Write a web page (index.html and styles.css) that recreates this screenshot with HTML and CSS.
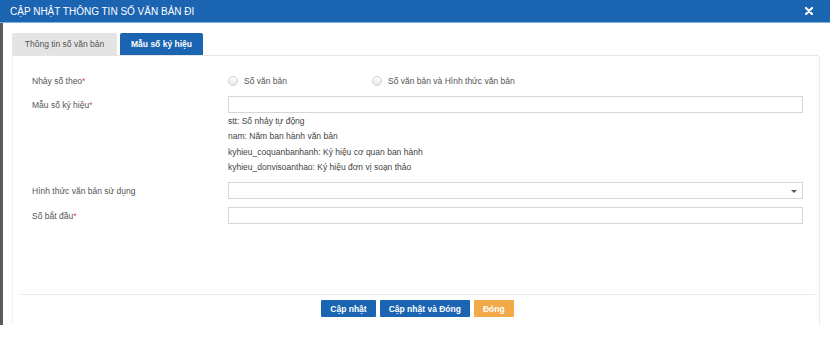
FILE: index.html
```html
<!DOCTYPE html>
<html>
<head>
    <meta charset="utf-8">
    <link rel="stylesheet" href="styles.css">
</head>
<body>
    <div class="modal-header">
        <span class="modal-title">Cập nhật thông tin số văn bản đi</span>
        <svg class="close" width="8" height="8" viewBox="0 0 8 8">
            <path d="M1 1L7 7M7 1L1 7" stroke="#fff" stroke-width="2.2" stroke-linecap="round"/>
        </svg>
    </div>

    <div class="shell">
        <div class="tabs">
            <div class="tab">Thông tin số văn bản</div>
            <div class="tab active">Mẫu số ký hiệu</div>
        </div>

        <div class="panel">
            <div class="form">
                <div class="row">
                    <label>Nhảy số theo<span class="req">*</span></label>
                    <div class="radios">
                        <span class="radio"><i></i>Số văn bản</span>
                        <span class="radio"><i></i>Số văn bản và Hình thức văn bản</span>
                    </div>
                </div>

                <div class="row">
                    <label>Mẫu số ký hiệu<span class="req">*</span></label>
                    <div class="input"></div>
                </div>

                <div class="row help-row">
                    <span></span>
                    <div class="help">
                        <div>stt: Số nhảy tự động</div>
                        <div>nam: Năm ban hành văn bản</div>
                        <div>kyhieu_coquanbanhanh: Ký hiệu cơ quan ban hành</div>
                        <div>kyhieu_donvisoanthao: Ký hiệu đơn vị soạn thảo</div>
                    </div>
                </div>

                <div class="row gap-select">
                    <label>Hình thức văn bản sử dụng</label>
                    <div class="input select"><span class="caret"></span></div>
                </div>

                <div class="row">
                    <label>Số bắt đầu<span class="req">*</span></label>
                    <div class="input"></div>
                </div>
            </div>

            <div class="footer">
                <button class="btn btn-primary">Cập nhật</button>
                <button class="btn btn-primary">Cập nhật và Đóng</button>
                <button class="btn btn-warning">Đóng</button>
            </div>
        </div>
    </div>
</body>
</html>
```

FILE: styles.css
```css
body {
    margin: 0;
    font-family: "Liberation Sans", Arial, sans-serif;
    font-size: 8.5px;
    color: #444;
    background-color: #fff;
}
.modal-header {
    height: 22px;
    background-color: #1b64b2;
    border-bottom: 1px solid #7fb2e0;
    display: flex;
    align-items: center;
    justify-content: space-between;
    padding: 0 17px 0 10px;
}
.modal-title {
    color: #fff;
    text-transform: uppercase;
    font-size: 10px;
}
.shell {
    height: 292px;
    border-left: 3px solid #5c5c5c;
    padding: 10px 0 0 9px;
    display: flex;
    flex-direction: column;
    width: 808px;
}
.tabs {
    display: flex;
    gap: 3px;
    border-bottom: 1px solid #e6e6e6;
    width: 806px;
}
.tab {
    box-sizing: border-box;
    width: 105px;
    height: 22px;
    line-height: 22px;
    text-align: center;
    white-space: nowrap;
    background-color: #e4e4e4;
    color: #555;
    border-radius: 2px 2px 0 0;
}
.tab.active {
    width: 83px;
    background-color: #1b64b2;
    color: #fff;
    font-weight: bold;
}
.panel {
    flex: 1;
    border-left: 1px solid #f0f0f0;
    border-right: 1px solid #ececec;
    display: flex;
    flex-direction: column;
}
.form {
    padding: 17px 0 0 19px;
}
.row {
    display: grid;
    grid-template-columns: 196px 575px;
    align-items: center;
    margin-bottom: 7px;
}
.row label {
    color: #555;
}
.req {
    color: #e04848;
}
.radios {
    display: flex;
    height: 16px;
    align-items: center;
}
.radio {
    display: flex;
    align-items: center;
    color: #555;
    width: 144px;
}
.radio i {
    width: 8px;
    height: 8px;
    border: 1px solid #cfcfcf;
    border-radius: 50%;
    background: linear-gradient(#fff, #e8e8e8);
    margin-right: 6px;
}
.input {
    height: 15px;
    border: 1px solid #d6d6d6;
    background-color: #fff;
    position: relative;
}
.help-row {
    margin-top: -7px;
}
.help {
    line-height: 15.3px;
    padding-top: 1px;
    color: #444;
}
.gap-select {
    margin-bottom: 8px;
}
.caret {
    position: absolute;
    right: 5px;
    top: 7px;
    border-left: 3px solid transparent;
    border-right: 3px solid transparent;
    border-top: 3px solid #555;
}
.footer {
    margin: auto 4px 0 7px;
    border-top: 1px solid #ebebeb;
    height: 25px;
    display: flex;
    justify-content: center;
    gap: 4px;
    padding-top: 5px;
}
.btn {
    height: 17px;
    padding: 0 9px;
    border: none;
    border-radius: 1px;
    font-family: "Liberation Sans", Arial, sans-serif;
    font-size: 8.5px;
    font-weight: bold;
    color: #fff;
}
.btn-primary {
    background-color: #1b64b2;
}
.btn-warning {
    background-color: #f2a94a;
}
```
